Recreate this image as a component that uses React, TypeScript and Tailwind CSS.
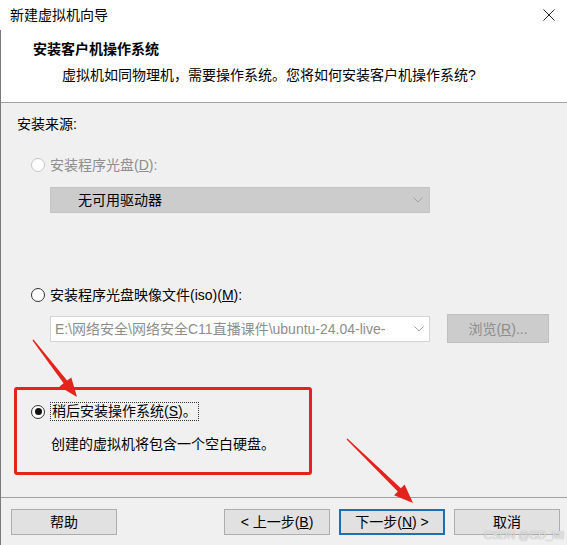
import React from 'react';

// arrow polygon for the red annotation arrows
function arrowPoints(x1: number, y1: number, x2: number, y2: number) {
  const dx = x2 - x1;
  const dy = y2 - y1;
  const len = Math.sqrt(dx * dx + dy * dy);
  const ux = dx / len;
  const uy = dy / len;
  const nx = -uy;
  const ny = ux;
  const headLen = 19;
  const bx = x2 - ux * headLen;
  const by = y2 - uy * headLen;
  const pts = [
    [x1 + nx * 0.6, y1 + ny * 0.6],
    [bx + nx * 2.2, by + ny * 2.2],
    [bx + nx * 7.5, by + ny * 7.5],
    [x2, y2],
    [bx - nx * 7.5, by - ny * 7.5],
    [bx - nx * 2.2, by - ny * 2.2],
    [x1 - nx * 0.6, y1 - ny * 0.6],
  ];
  return pts.map((p) => p[0].toFixed(1) + ',' + p[1].toFixed(1)).join(' ');
}

function Radio({ checked, disabled }: { checked?: boolean; disabled?: boolean }) {
  return (
    <span
      className={
        'w-[14px] h-[14px] rounded-full border flex items-center justify-center shrink-0 ' +
        (disabled ? 'border-[#c4c4c4] bg-white' : 'border-[#333333] bg-white')
      }
    >
      {checked && <span className="w-[7px] h-[7px] rounded-full bg-[#111111]" />}
    </span>
  );
}

function Chevron() {
  return (
    <svg width="10" height="6" viewBox="0 0 10 6" className="shrink-0">
      <path d="M0.5 0.5 L5 5 L9.5 0.5" fill="none" stroke="#a0a0a0" strokeWidth="1" />
    </svg>
  );
}

function Button({ children, primary }: { children: React.ReactNode; primary?: boolean }) {
  return (
    <button
      className={
        'w-[106px] h-[26px] flex items-center justify-center text-[14px] leading-[20px] text-black bg-[#e1e1e1] ' +
        (primary ? 'border-2 border-[#1a6fb5]' : 'border border-[#adadad]')
      }
    >
      {children}
    </button>
  );
}

export default function App() {
  return (
    <div className="relative w-[567px] h-[545px] overflow-hidden bg-[#f0f0f0] text-black font-['Liberation_Sans','Noto_Sans_CJK_SC',sans-serif] text-[14px] leading-[20px]">
      {/* Title bar */}
      <div className="h-[30px] bg-white flex items-center justify-between pl-[10px] pr-[12px]">
        <span className="text-[14px]">新建虚拟机向导</span>
        <svg width="12" height="12" viewBox="0 0 12 12">
          <path d="M0.5 0.5 L11.5 11.5 M11.5 0.5 L0.5 11.5" stroke="#222" strokeWidth="1" />
        </svg>
      </div>

      <div className="h-[515px] flex flex-col border-l border-[#7a7a7a]">
        {/* Header */}
        <div className="h-[73px] bg-white border-b border-[#a0a0a0] pt-[9px]">
          <div className="pl-[32px] font-bold">安装客户机操作系统</div>
          <div className="pl-[61px] mt-[6px]">虚拟机如同物理机，需要操作系统。您将如何安装客户机操作系统?</div>
        </div>

        {/* Body */}
        <div className="flex-1 pl-[16px] pt-[11px]">
          <div>安装来源:</div>

          <div className="mt-[21px] ml-[14px] flex items-center gap-[5px] text-[#8d8d8d]">
            <Radio disabled />
            <span>
              安装程序光盘(<span className="underline">D</span>):
            </span>
          </div>

          <div className="mt-[12px] ml-[33px] w-[380px] h-[26px] bg-[#cccccc] border border-[#c4c4c4] flex items-center justify-between pl-[27px] pr-[6px]">
            <span>无可用驱动器</span>
            <Chevron />
          </div>

          <div className="mt-[72px] ml-[14px] flex items-center gap-[5px]">
            <Radio />
            <span>
              安装程序光盘映像文件(iso)(<span className="underline">M</span>):
            </span>
          </div>

          <div className="mt-[9px] ml-[33px] flex items-center gap-[17px]">
            <div className="w-[380px] h-[26px] bg-white border border-[#d4d4d4] flex items-center justify-between pl-[4px] pr-[5px]">
              <span className="whitespace-nowrap text-[#8d8d8d]">E:\网络安全\网络安全C11直播课件\ubuntu-24.04-live-</span>
              <Chevron />
            </div>
            <div className="w-[102px] h-[29px] bg-[#cccccc] border border-[#bfbfbf] flex items-center justify-center text-[#8d8d8d]">
              <span>
                浏览(<span className="underline">R</span>)...
              </span>
            </div>
          </div>

          <div className="mt-[59px] ml-[14px] flex items-center gap-[5px]">
            <Radio checked />
            <span className="border border-dotted border-[#333] px-[1px] leading-[17px]">
              稍后安装操作系统(<span className="underline">S</span>)。
            </span>
          </div>

          <div className="mt-[13px] ml-[34px]">创建的虚拟机将包含一个空白硬盘。</div>
        </div>

        {/* Footer */}
        <div className="h-[48px] border-t border-[#a0a0a0] flex items-start pt-[11px] pl-[10px] pr-[7px]">
          <Button>帮助</Button>
          <div className="ml-auto flex gap-[9px]">
            <Button>
              &lt; 上一步(<span className="underline">B</span>)
            </Button>
            <Button primary>
              下一步(<span className="underline">N</span>) &gt;
            </Button>
            <Button>取消</Button>
          </div>
        </div>
      </div>

      {/* annotation: red box */}
      <div className="absolute left-[14px] top-[387px] w-[298px] h-[88px] border-[3px] border-[#e3231c] rounded-[3px] pointer-events-none" />

      {/* annotation: arrows */}
      <svg className="absolute left-0 top-0 pointer-events-none" width="567" height="545">
        <polygon points={arrowPoints(33, 340, 77, 397)} fill="#e3231c" />
        <polygon points={arrowPoints(347, 439, 413, 503)} fill="#e3231c" />
      </svg>

      {/* watermark */}
      <div className="absolute left-[484px] top-[527px] text-[11px] leading-[16px] text-white/80 [text-shadow:0_0_1px_#777] pointer-events-none">
        CSDN @GD_MI
      </div>
    </div>
  );
}
